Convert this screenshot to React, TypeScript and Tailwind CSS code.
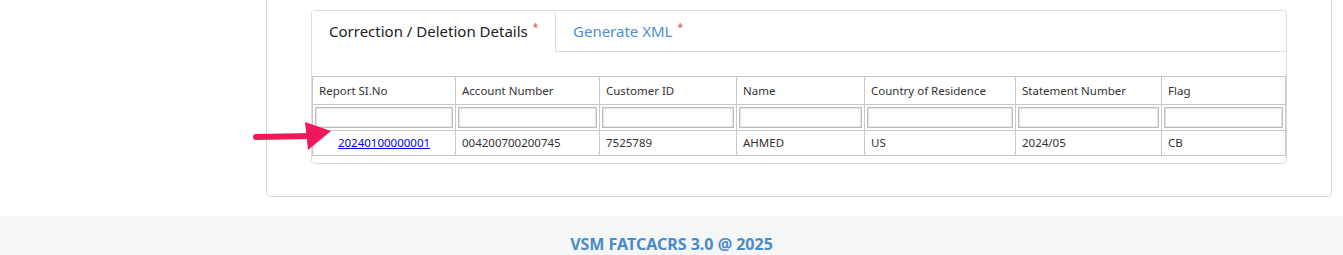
import React from "react";

const cols = [
  { label: "Report SI.No", w: 143 },
  { label: "Account Number", w: 144 },
  { label: "Customer ID", w: 137 },
  { label: "Name", w: 128 },
  { label: "Country of Residence", w: 151 },
  { label: "Statement Number", w: 146 },
  { label: "Flag", w: 124 },
];

const data = ["20240100000001", "004200700200745", "7525789", "AHMED", "US", "2024/05", "CB"];

export default function App() {
  return (
    <div className="relative w-[1343px] h-[255px] overflow-hidden bg-white text-[#333] font-['Segoe_UI','Noto_Sans',sans-serif]">
      <div className="flex">
        <div className="w-[266px] shrink-0" />
        <div className="w-[1066px] h-[197px] border-x border-b border-[#d6d6d6] rounded-b-[5px] pt-[10px] px-[44px]">
          <div className="h-[154px] border border-[#dcdcdc] rounded-[4px] flex flex-col">
            <div className="flex h-[41px] border-b border-[#dcdcdc]">
              <div className="-mb-px w-[244px] h-[41px] bg-white border-r border-[#dcdcdc] rounded-tr-[4px] flex items-center pl-[17px] text-[15px] text-[#222]">
                <span>Correction / Deletion Details</span>
                <span className="text-[#e43d3d] text-[10px] self-start mt-[9px] ml-[5px]">*</span>
              </div>
              <div className="flex items-center pl-[17px] text-[15px] text-[#4a90d0]">
                <span>Generate XML</span>
                <span className="text-[#e43d3d] text-[10px] self-start mt-[9px] ml-[5px]">*</span>
              </div>
            </div>
            <div className="mt-[24px]">
              <table className="border-collapse text-[11.5px] text-[#333] table-fixed w-[974px]">
                <colgroup>
                  {cols.map((c) => (
                    <col key={c.label} style={{ width: c.w }} />
                  ))}
                </colgroup>
                <thead>
                  <tr className="h-[28px]">
                    {cols.map((c) => (
                      <th key={c.label} className="border border-[#c8c8c8] font-normal text-left px-[6px] align-middle">
                        {c.label}
                      </th>
                    ))}
                  </tr>
                  <tr className="h-[26px]">
                    {cols.map((c) => (
                      <th key={c.label} className="border border-[#c8c8c8] p-[2px] align-middle">
                        <div className="h-[21px] border border-[#bdbdbd] bg-white shadow-[inset_0_0_0_1px_#e6e6e6]" />
                      </th>
                    ))}
                  </tr>
                </thead>
                <tbody>
                  <tr className="h-[25px]">
                    {data.map((d, i) => (
                      <td
                        key={i}
                        className={
                          i === 0
                            ? "border border-[#c8c8c8] text-center align-middle"
                            : "border border-[#c8c8c8] px-[6px] align-middle"
                        }
                      >
                        {i === 0 ? (
                          <a href="#" className="text-[#0000ee] underline">
                            {d}
                          </a>
                        ) : (
                          d
                        )}
                      </td>
                    ))}
                  </tr>
                </tbody>
              </table>
            </div>
          </div>
        </div>
      </div>
      <div className="mt-[19px] h-[39px] bg-[#f5f6f8] flex justify-center pt-[20px]">
        <span className="text-[16px] font-bold text-[#4a8ac8] leading-none">VSM FATCACRS 3.0 @ 2025</span>
      </div>
      <svg className="absolute left-[250px] top-[118px]" width="85" height="36" viewBox="0 0 85 36">
        <path d="M6 19 L62 18" stroke="#f0175a" strokeWidth="6" strokeLinecap="round" />
        <polygon points="55,4 81,13 58,32" fill="#f0175a" />
      </svg>
    </div>
  );
}
